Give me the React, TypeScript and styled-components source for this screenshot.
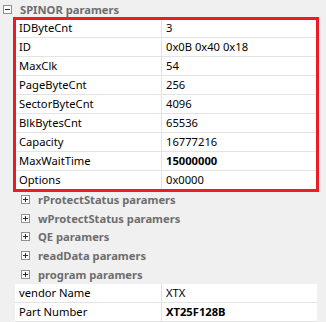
import React from 'react';
import styled, { createGlobalStyle } from 'styled-components';

const GlobalStyle = createGlobalStyle`
  html, body {
    margin: 0;
    padding: 0;
    background: #f0f0f0;
    overflow: hidden;
  }
  body {
    font-family: 'Noto Sans', 'Open Sans', Arial, sans-serif;
    font-size: 11.2px;
  }
`;

const Grid = styled.div`
  width: 326px;
  height: 322px;
  background: #f0f0f0;
  display: flex;
  flex-direction: column;
`;

const CategoryRow = styled.div<{ $indent: number }>`
  display: flex;
  align-items: center;
  height: 19px;
  padding-left: ${p => p.$indent}px;
  color: #6d6d6d;
  font-weight: 700;
  gap: 8px;
`;

const Highlight = styled.div`
  display: flex;
  flex-direction: column;
  outline: 3px solid #ec1c24;
  outline-offset: -1px;
  margin: 0 9px 0 15px;
  position: relative;
  z-index: 1;
`;

const Rows = styled.div`
  display: flex;
  flex-direction: column;
  margin: 0 9px 0 15px;
`;

const PropRow = styled.div`
  display: grid;
  grid-template-columns: 147px 1fr;
  height: 19px;
  box-sizing: border-box;
  border-bottom: 1px solid #e3e3e3;
  background: #fff;
  color: #000;
`;

const Label = styled.div`
  display: flex;
  align-items: center;
  padding-left: 4px;
  border-right: 1px solid #e3e3e3;
  white-space: nowrap;
  overflow: hidden;
`;

const Value = styled.div<{ $bold?: boolean }>`
  display: flex;
  align-items: center;
  padding-left: 4px;
  font-weight: ${p => (p.$bold ? 700 : 400)};
  white-space: nowrap;
`;

function Expander({ open }: { open: boolean }) {
  return (
    <svg width="9" height="9" viewBox="0 0 9 9">
      <rect x="0.5" y="0.5" width="8" height="8" fill="#fff" stroke="#8f8f8f" />
      <line x1="2" y1="4.5" x2="7" y2="4.5" stroke="#1c2f55" />
      {!open && <line x1="4.5" y1="2" x2="4.5" y2="7" stroke="#1c2f55" />}
    </svg>
  );
}

const spinor: [string, string, boolean?][] = [
  ['IDByteCnt', '3'],
  ['ID', '0x0B 0x40 0x18'],
  ['MaxClk', '54'],
  ['PageByteCnt', '256'],
  ['SectorByteCnt', '4096'],
  ['BlkBytesCnt', '65536'],
  ['Capacity', '16777216'],
  ['MaxWaitTime', '15000000', true],
  ['Options', '0x0000'],
];

const groups = [
  'rProtectStatus paramers',
  'wProtectStatus paramers',
  'QE paramers',
  'readData paramers',
  'program paramers',
];

export default function App() {
  return (
    <>
      <GlobalStyle />
      <Grid>
        <CategoryRow $indent={3}>
          <Expander open />
          <span>SPINOR paramers</span>
        </CategoryRow>
        <Highlight>
          {spinor.map(([name, val, bold]) => (
            <PropRow key={name}>
              <Label>{name}</Label>
              <Value $bold={bold}>{val}</Value>
            </PropRow>
          ))}
        </Highlight>
        {groups.map(g => (
          <CategoryRow key={g} $indent={21}>
            <Expander open={false} />
            <span>{g}</span>
          </CategoryRow>
        ))}
        <Rows>
          <PropRow>
            <Label>vendor Name</Label>
            <Value>XTX</Value>
          </PropRow>
          <PropRow>
            <Label>Part Number</Label>
            <Value $bold>XT25F128B</Value>
          </PropRow>
        </Rows>
      </Grid>
    </>
  );
}
